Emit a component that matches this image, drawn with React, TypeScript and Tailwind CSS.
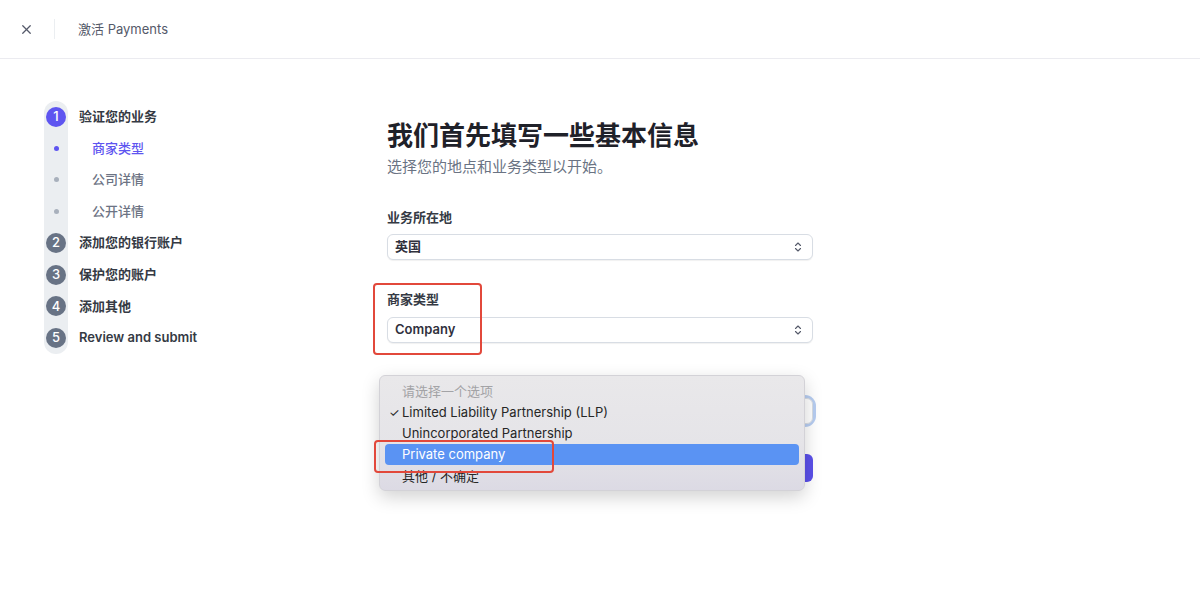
import { ChevronsUpDown, X } from "lucide-react";

const font = "font-['Inter','Noto_Sans_CJK_SC',sans-serif]";

const steps = [
  { kind: "num", n: "1", label: "验证您的业务", active: true },
  { kind: "dot", label: "商家类型", active: true },
  { kind: "dot", label: "公司详情" },
  { kind: "dot", label: "公开详情" },
  { kind: "num", n: "2", label: "添加您的银行账户" },
  { kind: "num", n: "3", label: "保护您的账户" },
  { kind: "num", n: "4", label: "添加其他" },
  { kind: "num", n: "5", label: "Review and submit" },
];

function Select({ value, bold }: { value: string; bold?: boolean }) {
  return (
    <div className="flex h-[26px] items-center justify-between rounded-md border border-[#d8dde4] bg-white pl-[7px] pr-[8px] shadow-[0_1px_1px_rgba(0,0,0,0.06)]">
      <span className={`text-[13px] text-[#30313d] ${bold ? "font-semibold" : "font-medium"}`}>{value}</span>
      <ChevronsUpDown size={12} strokeWidth={2.2} className="text-[#545969]" />
    </div>
  );
}

function Sidebar() {
  return (
    <aside className="ml-[44px] mt-[42px] w-[300px] shrink-0">
      {steps.map((s, i) => {
        const first = i === 0;
        const last = i === steps.length - 1;
        return (
          <div key={s.label} className="flex h-[31.6px] items-stretch">
            <div
              className={[
                "flex w-6 items-center justify-center bg-[#ebeef1]",
                first ? "rounded-t-full" : "",
                last ? "rounded-b-full" : "",
              ].join(" ")}
            >
              {s.kind === "num" ? (
                <span
                  className={`grid size-5 place-items-center rounded-full text-[13px] font-medium text-white ${
                    s.active ? "bg-[#5e55f0]" : "bg-[#687385]"
                  }`}
                >
                  {s.n}
                </span>
              ) : (
                <span className={`size-[5px] rounded-full ${s.active ? "bg-[#5e55f0]" : "bg-[#a8b0bc]"}`} />
              )}
            </div>
            <div
              className={[
                "flex items-center text-[13px]",
                s.kind === "num" ? "ml-[11px] font-semibold text-[#353a44]" : "ml-6 font-medium",
                s.kind === "dot" && s.active ? "text-[#5e55f0]" : s.kind === "dot" ? "text-[#6c7384]" : "",
              ].join(" ")}
            >
              {s.label}
            </div>
          </div>
        );
      })}
    </aside>
  );
}

export default function App() {
  return (
    <div className={`relative h-[591px] w-[1200px] overflow-hidden bg-white ${font}`}>
      <header className="flex h-[59px] items-center border-b border-[#ebebf0]">
        <X size={15} strokeWidth={2} className="ml-[19px] text-[#545969]" />
        <div className="ml-[20px] h-5 w-px bg-[#ebeef1]" />
        <span className="ml-[23px] mt-[2px] text-[13px] text-[#545969]">激活 Payments</span>
      </header>

      <div className="flex">
        <Sidebar />
        <main className="ml-[43px] w-[426px] pt-[61px]">
          <h1 className="text-[26px] font-bold leading-8 text-[#1f2129]">我们首先填写一些基本信息</h1>
          <p className="mt-[5px] text-[15px] leading-5 text-[#6a7383]">选择您的地点和业务类型以开始。</p>

          <label className="mt-[31px] block text-[13px] font-semibold leading-[18px] text-[#353a44]">业务所在地</label>
          <div className="mt-2">
            <Select value="英国" bold />
          </div>

          <label className="mt-[30px] block text-[13px] font-semibold leading-[18px] text-[#353a44]">商家类型</label>
          <div className="mt-[9px]">
            <Select value="Company" bold />
          </div>

          {/* field hidden behind the open menu */}
          <div className="mt-[31px] h-[18px]" />
          <div className="mt-[6px] rounded-[8px] ring-[3px] ring-[#b7cdf1]">
            <div className="h-[26px] rounded-md border border-[#d8dde4] bg-white" />
          </div>

          <div className="mt-[30px] h-[28px] w-full rounded-md bg-[#5b50ea]" />
        </main>
      </div>

      {/* native select menu */}
      <div className="absolute left-[379px] top-[375px] h-[116px] w-[426px] rounded-[6px] border border-[#d3d2d7] bg-[linear-gradient(180deg,#e9e8ea_0%,#e5e4e8_60%,#dcdae4_100%)] px-[5px] pt-[5px] shadow-[0_6px_18px_rgba(0,0,0,0.18)]">
        <div className="flex h-[21px] items-center pl-[17px] text-[13px] text-[#a3a3a6]">请选择一个选项</div>
        <div className="flex h-[21px] items-center text-[13px] text-[#262626]">
          <span className="w-[17px] pl-[4px] text-[12px]">✓</span>
          Limited Liability Partnership (LLP)
        </div>
        <div className="flex h-[21px] items-center pl-[17px] text-[13px] text-[#262626]">Unincorporated Partnership</div>
        <div className="flex h-[21px] items-center rounded-[4px] bg-[#5a93f3] pl-[17px] text-[13px] text-white">
          Private company
        </div>
        <div className="flex h-[21px] items-center pl-[17px] pt-[3px] text-[13px] text-[#262626]">其他 / 不确定</div>
      </div>

      {/* annotation boxes */}
      <div className="absolute left-[373px] top-[283px] h-[72px] w-[109px] rounded-[4px] border-2 border-[#e2483b]" />
      <div className="absolute left-[374px] top-[440px] h-[33px] w-[180px] rounded-[4px] border-2 border-[#e2483b]" />
    </div>
  );
}
